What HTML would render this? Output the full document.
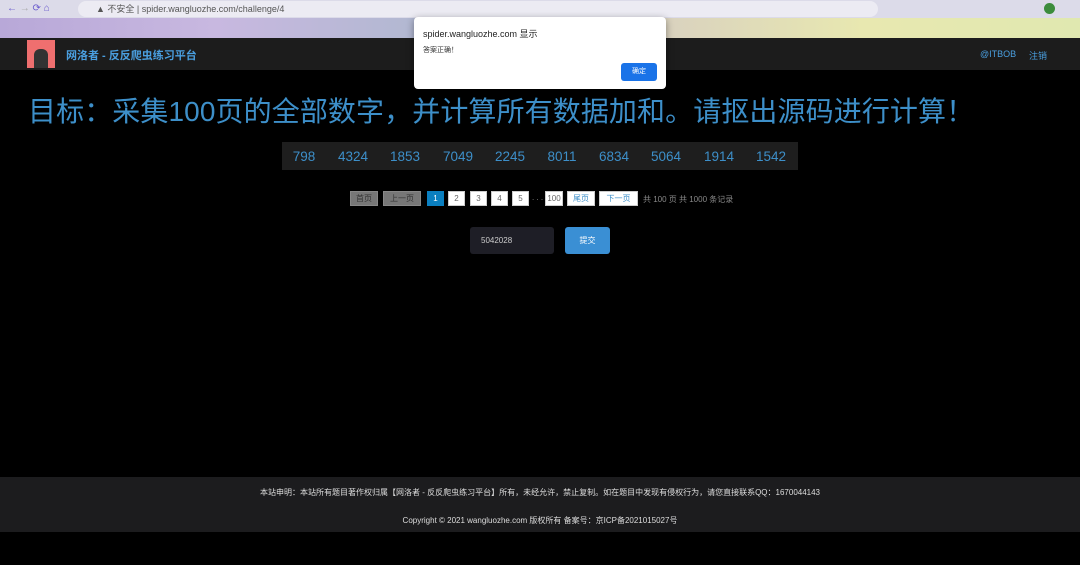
<!DOCTYPE html>
<html><head><meta charset="utf-8"><style>
*{margin:0;padding:0;box-sizing:border-box}
body{width:1080px;height:565px;background:#000;position:relative;overflow:hidden;font-family:"Liberation Sans","Noto Sans CJK SC",sans-serif}
.abs{position:absolute}
.chrome{left:0;top:0;width:1080px;height:18px;background:#dcdbe9}
.url{left:78px;top:1px;width:800px;height:16px;background:#ecebf3;border-radius:8px;font-size:9px;color:#555;line-height:16px;padding-left:18px}
.blur{left:0;top:18px;width:1080px;height:20px;background:linear-gradient(90deg,#b8a8d8,#c8b8e0 20%,#b0b8d0 40%,#d8d0c0 60%,#e8e8b0 80%,#e0e8b0)}
.nav{left:0;top:38px;width:1080px;height:32px;background:#1c1c1c}
.logo{left:27px;top:40px;width:28px;height:28px;background:#ef6f6f}
.brand{left:66px;top:47px;font-size:11px;font-weight:bold;color:#4a9fe0}
.navr{top:49px;font-size:9px;color:#4a9fe0}
.title{left:28px;top:90px;font-size:28px;color:#3d8fc9;white-space:nowrap;letter-spacing:0.1px}
.nums{left:282px;top:142px;width:516px;height:28px;background:#1e1e1e}
.nums span{position:absolute;top:7px;font-size:13.5px;color:#3d8fc9;transform:translateX(-50%)}
.pg{top:191px;height:15px;font-size:8px;line-height:13px;text-align:center;border:1px solid #ccc;background:#fff;color:#666}
.dlg{left:414px;top:17px;width:252px;height:72px;background:#fff;border-radius:4px;box-shadow:0 2px 8px rgba(0,0,0,.4)}
.footer{left:0;top:477px;width:1080px;height:55px;background:#1c1c1e;color:#ddd;font-size:8px;text-align:center}
</style></head><body>
<div class="abs chrome"></div>
<div class="abs" style="left:7px;top:3px;font-size:10px;color:#6a5acd">← <span style="color:#aaa">→</span> ⟳ ⌂</div>
<div class="abs url">▲ 不安全 | spider.wangluozhe.com/challenge/4</div>
<div class="abs" style="left:1044px;top:3px;width:11px;height:11px;border-radius:50%;background:#3c8c3c"></div>
<div class="abs blur"></div>
<div class="abs nav"></div>
<div class="abs logo"><div style="position:absolute;left:7px;top:9px;width:14px;height:19px;background:#333;border-radius:6px 6px 0 0"></div></div>
<div class="abs brand">网洛者 - 反反爬虫练习平台</div>
<div class="abs navr" style="left:980px">@ITBOB</div>
<div class="abs navr" style="left:1029px">注销</div>
<div class="abs title">目标：采集100页的全部数字，并计算所有数据加和。请抠出源码进行计算！</div>
<div class="abs nums">
<span style="left:22px">798</span><span style="left:71px">4324</span><span style="left:123px">1853</span><span style="left:176px">7049</span><span style="left:228px">2245</span><span style="left:280px">8011</span><span style="left:332px">6834</span><span style="left:384px">5064</span><span style="left:437px">1914</span><span style="left:489px">1542</span>
</div>
<div class="abs pg" style="left:350px;width:28px;background:#777;border-color:#888;color:#333">首页</div>
<div class="abs pg" style="left:383px;width:38px;background:#777;border-color:#888;color:#333">上一页</div>
<div class="abs pg" style="left:427px;width:17px;background:#0a7fc0;border-color:#0a7fc0;color:#fff">1</div>
<div class="abs pg" style="left:448px;width:17px">2</div>
<div class="abs pg" style="left:470px;width:17px">3</div>
<div class="abs pg" style="left:491px;width:17px">4</div>
<div class="abs pg" style="left:512px;width:17px">5</div>
<div class="abs" style="left:532px;top:193px;font-size:8px;color:#888">. . .</div>
<div class="abs pg" style="left:545px;width:18px">100</div>
<div class="abs pg" style="left:567px;width:28px;color:#3d8fc9">尾页</div>
<div class="abs pg" style="left:599px;width:39px;color:#3d8fc9">下一页</div>
<div class="abs" style="left:643px;top:194px;font-size:8px;color:#888">共 100 页 共 1000 条记录</div>
<div class="abs" style="left:470px;top:227px;width:84px;height:27px;background:#1e1e26;border-radius:3px;color:#ccc;font-size:8px;line-height:27px;padding-left:11px">5042028</div>
<div class="abs" style="left:565px;top:227px;width:45px;height:27px;background:#3a8fd4;border-radius:3px;color:#fff;font-size:8px;line-height:27px;text-align:center">提交</div>
<div class="abs dlg">
<div class="abs" style="left:9px;top:10px;font-size:9px;color:#222">spider.wangluozhe.com 显示</div>
<div class="abs" style="left:9px;top:28px;font-size:7px;color:#333">答案正确！</div>
<div class="abs" style="left:207px;top:46px;width:36px;height:18px;background:#1a73e8;border-radius:3px;color:#fff;font-size:7px;line-height:18px;text-align:center">确定</div>
</div>
<div class="abs footer">
<div style="position:absolute;top:10px;width:100%">本站申明：本站所有题目著作权归属【网洛者 - 反反爬虫练习平台】所有，未经允许，禁止复制。如在题目中发现有侵权行为，请您直接联系QQ：1670044143</div>
<div style="position:absolute;top:38px;width:100%">Copyright © 2021 wangluozhe.com 版权所有 备案号：京ICP备2021015027号</div>
</div>
</body></html>
